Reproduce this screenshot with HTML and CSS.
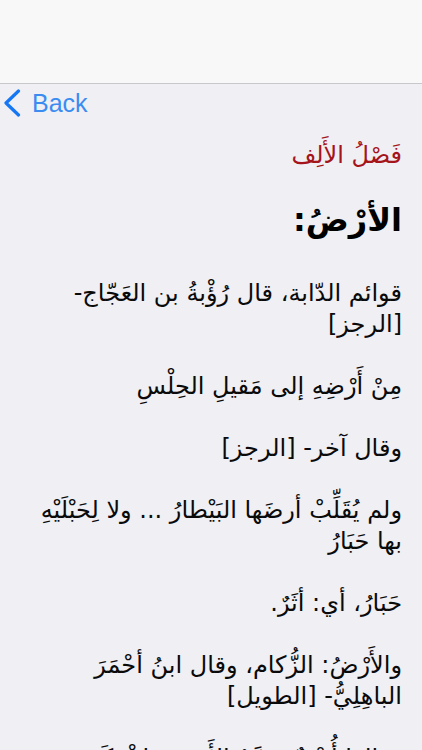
FILE: index.html
```html
<!DOCTYPE html>
<html lang="ar">
<head>
<meta charset="utf-8">
<title>فصل الألف</title>
<link rel="stylesheet" href="styles.css">
</head>
<body>
<header class="topbar"></header>
<nav class="toolbar">
  <a class="back" href="#">
    <svg class="chev" width="19" height="28" viewBox="0 0 19 28" aria-hidden="true">
      <polyline points="15.5,2 3,14 15.5,26" fill="none" stroke="#1677f5" stroke-width="3.2" stroke-linecap="round" stroke-linejoin="round"/>
    </svg>
    <span class="back-label">Back</span>
  </a>
</nav>
<main class="content" dir="rtl">
  <h2 class="section">فَصْلُ الأَلِف</h2>
  <h1 class="entry">الأرْضُ:</h1>
  <p>قوائم الدّابة، قال رُؤْبةُ بن العَجّاج- [الرجز]</p>
  <p>مِنْ أَرْضِهِ إلى مَقيلِ الحِلْسِ</p>
  <p>وقال آخر- [الرجز]</p>
  <p>ولم يُقَلِّبْ أرضَها البَيْطارُ ... ولا لِحَبْلَيْهِ بها حَبَارُ</p>
  <p>حَبَارُ، أي: أثَرٌ.</p>
  <p>والأَرْضُ: الزُّكام، وقال ابنُ أحْمَرَ الباهِلِيُّ- [الطويل]</p>
  <p>وقالوا أُنَيْفٌ مَسَّهُ الأَرْضُ فاشْتَكَى ... وقَدْ رَقَّ جِلْدُهُ</p>
</main>
</body>
</html>
```
FILE: styles.css
```css
html, body {
  margin: 0;
  padding: 0;
}
body {
  width: 422px;
  height: 750px;
  overflow: hidden;
  background: #efeff4;
  font-family: "DejaVu Sans", "Noto Sans", sans-serif;
}
.topbar {
  height: 83px;
  background: #f8f8f8;
  border-bottom: 1px solid #c8c7cc;
}
.toolbar {
  height: 40px;
  display: flex;
  align-items: center;
  padding-left: 3px;
}
.back {
  display: flex;
  align-items: center;
  gap: 10px;
  text-decoration: none;
}
.chev {
  display: block;
  margin-top: -3px;
}
.back-label {
  font-family: "Liberation Sans", Arial, sans-serif;
  font-size: 25px;
  color: #3a8cf1;
  line-height: 30px;
  margin-top: -3px;
}
.content {
  padding: 0 20px;
  text-align: right;
  color: #0a0a0a;
}
.section {
  margin: 16px 0 0;
  font-size: 24px;
  font-weight: normal;
  color: #a5141a;
  line-height: 30px;
}
.entry {
  margin: 30px 0 0;
  font-size: 32px;
  font-weight: bold;
  line-height: 40px;
  color: #000;
}
.content p {
  margin: 38px 0 0;
  font-size: 24px;
  line-height: 31px;
}
.content p + p {
  margin-top: 31px;
}
```
